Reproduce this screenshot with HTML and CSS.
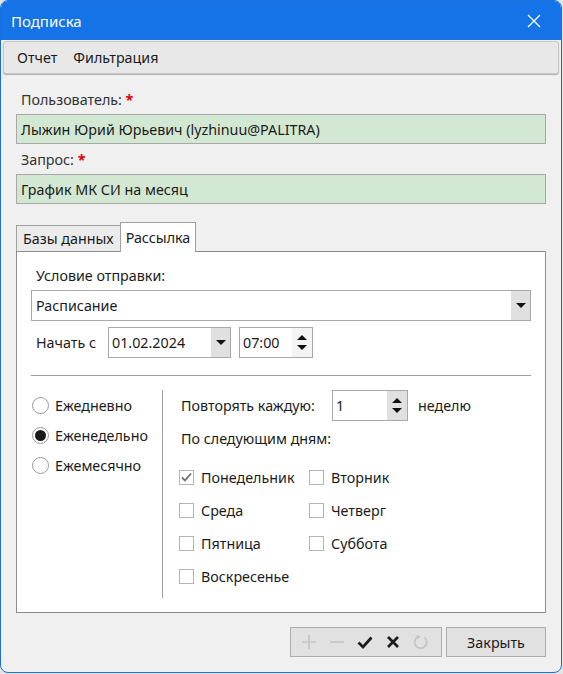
FILE: index.html
```html
<!DOCTYPE html>
<html lang="ru">
<head>
   <meta charset="UTF-8">
   <meta name="viewport" content="width=device-width, initial-scale=1.0">
   <title>Подписка</title>
   <link rel="stylesheet" href="styles.css">
</head>
<body>
   <div class="window">
      <div class="titlebar">
         <span class="title">Подписка</span>
         <svg class="close" width="14" height="14" viewBox="0 0 14 14"><path d="M1 1L13 13M13 1L1 13" stroke="#fff" stroke-width="1.3"/></svg>
      </div>
      <div class="menubar">
         <span>Отчет</span>
         <span>Фильтрация</span>
      </div>

      <div class="content">
         <div class="field-label">Пользователь: <span class="req">*</span></div>
         <div class="input green">Лыжин Юрий Юрьевич (lyzhinuu@PALITRA)</div>
         <div class="field-label">Запрос: <span class="req">*</span></div>
         <div class="input green">График МК СИ на месяц</div>

         <div class="tabs">
            <div class="tab">Базы данных</div>
            <div class="tab active">Рассылка</div>
         </div>
         <div class="panel">
            <div class="cond-label">Условие отправки:</div>
            <div class="select">
               <span class="value">Расписание</span>
               <span class="drop"><i class="tri-down"></i></span>
            </div>
            <div class="start-row">
               <span class="start-label">Начать с</span>
               <div class="datebox">
                  <span class="value">01.02.2024</span>
                  <span class="drop"><i class="tri-down"></i></span>
               </div>
               <div class="spinbox timebox">
                  <span class="value">07:00</span>
                  <span class="spin"><i class="tri-up"></i><i class="tri-down"></i></span>
               </div>
            </div>
            <div class="separator"></div>

            <div class="lower">
               <div class="radios">
                  <label class="radio"><span class="circle"></span>Ежедневно</label>
                  <label class="radio"><span class="circle on"></span>Еженедельно</label>
                  <label class="radio"><span class="circle"></span>Ежемесячно</label>
               </div>
               <div class="weekly">
                  <div class="repeat-row">
                     <span class="repeat-label">Повторять каждую:</span>
                     <div class="spinbox countbox">
                        <span class="value">1</span>
                        <span class="spin grey"><i class="tri-up"></i><i class="tri-down"></i></span>
                     </div>
                     <span class="unit">неделю</span>
                  </div>
                  <div class="days-label">По следующим дням:</div>
                  <div class="days">
                     <label class="check"><span class="box checked"><svg width="13" height="13" viewBox="0 0 13 13"><path d="M2 6.5L5 9.5L11 2.5" fill="none" stroke="#707070" stroke-width="1.8"/></svg></span>Понедельник</label>
                     <label class="check"><span class="box"></span>Вторник</label>
                     <label class="check"><span class="box"></span>Среда</label>
                     <label class="check"><span class="box"></span>Четверг</label>
                     <label class="check"><span class="box"></span>Пятница</label>
                     <label class="check"><span class="box"></span>Суббота</label>
                     <label class="check"><span class="box"></span>Воскресенье</label>
                  </div>
               </div>
            </div>
         </div>
      </div>

      <div class="footer">
         <div class="toolgroup">
            <svg width="16" height="16" viewBox="0 0 16 16"><path d="M8 1V15M1 8H15" stroke="#c4c4c4" stroke-width="1.6"/></svg>
            <svg width="16" height="16" viewBox="0 0 16 16"><path d="M1 8H15" stroke="#c4c4c4" stroke-width="1.6"/></svg>
            <svg width="16" height="16" viewBox="0 0 16 16"><path d="M1.5 8.5L6 13L14.5 3.5" fill="none" stroke="#1e1e1e" stroke-width="2.8"/></svg>
            <svg width="16" height="16" viewBox="0 0 16 16"><path d="M3 3L13 13M13 3L3 13" stroke="#1e1e1e" stroke-width="2.8"/></svg>
            <svg width="16" height="16" viewBox="0 0 16 16"><path d="M11.5 3.6A6 6 0 1 1 5.2 2.8" fill="none" stroke="#c4c4c4" stroke-width="1.8"/><path d="M3.5 0.8L7.6 2.6L4.4 5.6Z" fill="#c4c4c4"/></svg>
         </div>
         <div class="button">Закрыть</div>
      </div>
   </div>
</body>
</html>
```

FILE: styles.css
```css
*{
   margin: 0;
   padding: 0;
   box-sizing: border-box;
}

body{
   background: #e4e4e4;
   font-family: "Noto Sans", "Open Sans", sans-serif;
   font-size: 14.3px;
   color: #1b1b1b;
}

.window{
   width: 562px;
   height: 673px;
   border: 1px solid #1a6fdc;
   border-radius: 8px;
   overflow: hidden;
   background: #f0f0f0;
   display: flex;
   flex-direction: column;
}

.titlebar{
   height: 39px;
   background: #1473e6;
   display: flex;
   align-items: center;
   justify-content: space-between;
   padding: 0 20px 0 10px;
   flex-shrink: 0;
}

.title{
   color: #fff;
   font-size: 15px;
}

.menubar{
   margin: 1px 2px 0 2px;
   height: 33px;
   background: #e8e8e8;
   border: 1px solid #c6c6c6;
   border-radius: 3px;
   box-shadow: 0 1px 1px #b0b0b0;
   display: flex;
   align-items: center;
   gap: 16px;
   padding-left: 13px;
   flex-shrink: 0;
}

.content{
   flex: 1;
   display: flex;
   flex-direction: column;
   padding: 0 15px;
}

.field-label{
   line-height: 20px;
   padding-left: 5px;
   margin-top: 16px;
   margin-bottom: 4px;
   color: #333;
}

.field-label + .input + .field-label{
   margin-top: 6px;
}

.req{
   color: #e00000;
   font-weight: bold;
}

.input{
   height: 30px;
   border: 1px solid #a8a8a8;
   display: flex;
   align-items: center;
   padding-left: 4px;
}

.green{
   background: #d3e8d3;
}

.tabs{
   display: flex;
   align-items: flex-end;
   margin-top: 18px;
   position: relative;
   z-index: 1;
}

.tab{
   height: 26px;
   padding: 0 6px;
   background: #ebebeb;
   border: 1px solid #a0a0a0;
   border-bottom: none;
   display: flex;
   align-items: center;
}

.tab.active{
   height: 30px;
   padding: 0 5px;
   background: #fff;
   margin-bottom: -1px;
   margin-left: -1px;
}

.panel{
   flex: 1;
   background: #fff;
   border: 1px solid #8c8c8c;
   padding: 0 14px;
}

.cond-label{
   line-height: 20px;
   margin-top: 14px;
   padding-left: 5px;
}

.select{
   margin-top: 4px;
   height: 31px;
   border: 1px solid #a8a8a8;
   display: flex;
}

.value{
   flex: 1;
   display: flex;
   align-items: center;
   padding-left: 4px;
}

.drop{
   width: 19px;
   background: #e0e0e0;
   display: flex;
   align-items: center;
   justify-content: center;
}

.tri-down, .tri-up{
   display: block;
   width: 0;
   height: 0;
   border-left: 5px solid transparent;
   border-right: 5px solid transparent;
}

.tri-down{
   border-top: 5px solid #111;
}

.tri-up{
   border-bottom: 5px solid #111;
}

.start-row{
   margin-top: 6px;
   display: flex;
   align-items: center;
   height: 31px;
}

.start-label{
   width: 77px;
   padding-left: 5px;
}

.datebox{
   width: 123px;
   height: 31px;
   border: 1px solid #a8a8a8;
   display: flex;
}

.datebox .value{
   padding-left: 3px;
}

.spinbox{
   height: 31px;
   border: 1px solid #a8a8a8;
   display: flex;
   background: #f4f4f4;
}

.spinbox .value{
   background: #fff;
   padding-left: 3px;
}

.timebox{
   width: 74px;
   margin-left: 8px;
}

.spin{
   width: 20px;
   display: flex;
   flex-direction: column;
   align-items: center;
   justify-content: center;
   gap: 5px;
}

.spin.grey{
   background: #e0e0e0;
}

.separator{
   margin-top: 17px;
   height: 1px;
   background: #a0a0a0;
}

.lower{
   margin-top: 14px;
   display: flex;
}

.radios{
   width: 132px;
   border-right: 1px solid #a0a0a0;
   height: 208px;
}

.radio{
   display: flex;
   align-items: center;
   height: 30px;
   gap: 6px;
}

.circle{
   width: 17px;
   height: 17px;
   border-radius: 50%;
   border: 1px solid #9a9a9a;
   background: #fff;
   margin-left: 1px;
   display: flex;
   align-items: center;
   justify-content: center;
}

.circle.on::after{
   content: "";
   width: 11px;
   height: 11px;
   border-radius: 50%;
   background: #1b1b1b;
}

.weekly{
   padding-left: 18px;
}

.repeat-row{
   display: flex;
   align-items: center;
   height: 31px;
}

.repeat-label{
   width: 151px;
}

.countbox{
   width: 76px;
}

.unit{
   margin-left: 10px;
}

.days-label{
   margin-top: 6px;
   line-height: 24px;
}

.days{
   margin-top: 10px;
   margin-left: -2px;
   display: grid;
   grid-template-columns: 130px auto;
   grid-auto-rows: 33px;
}

.check{
   display: flex;
   align-items: center;
   gap: 7px;
}

.box{
   width: 15px;
   height: 15px;
   border: 1px solid #b4b4b4;
   background: #fff;
   display: flex;
   align-items: center;
   justify-content: center;
}

.footer{
   display: flex;
   justify-content: flex-end;
   gap: 4px;
   padding: 14px 15px 15px;
   flex-shrink: 0;
}

.toolgroup{
   width: 152px;
   height: 30px;
   border: 1px solid #adadad;
   background: #e1e1e1;
   display: flex;
   align-items: center;
   gap: 12px;
   padding-left: 10px;
}

.button{
   width: 100px;
   height: 30px;
   border: 1px solid #adadad;
   background: #e1e1e1;
   display: flex;
   align-items: center;
   justify-content: center;
}
```
